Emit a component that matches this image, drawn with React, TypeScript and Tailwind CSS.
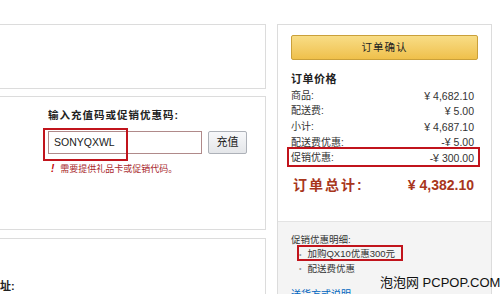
import type { ReactNode } from "react";

const font = {
  fontFamily: '"Liberation Sans", "Noto Sans CJK SC", Arial, sans-serif',
};

type PriceRowProps = {
  label: string;
  value: string;
};

function PriceRow({ label, value }: PriceRowProps) {
  return (
    <div className="flex h-[15.6px] items-center justify-between pr-[4px] text-[10px] leading-none text-[#333]">
      <span>{label}</span>
      <span className="text-[10.5px]">{value}</span>
    </div>
  );
}

function Mark({ className, children }: { className: string; children?: ReactNode }) {
  return (
    <div className={`pointer-events-none absolute border-2 border-[#c1141c] ${className}`}>
      {children}
    </div>
  );
}

export default function App() {
  return (
    <div
      style={font}
      className="relative flex h-[294px] w-[500px] overflow-hidden bg-white pt-[24px]"
    >
      {/* left column */}
      <div className="flex w-[266px] shrink-0 flex-col">
        <div className="h-[69px] border-y border-r border-[#dcdcdc]" />

        <div className="mt-[7px] h-[141px] border-y border-r border-[#dcdcdc] pl-[48px] pt-[11px]">
          <p className="text-[10.5px] font-bold leading-[14px] tracking-[1px] text-[#222]">
            输入充值码或促销优惠码:
          </p>
          <div className="mt-[9px] flex items-center gap-[6px]">
            <div className="flex h-[23px] w-[154px] items-center border border-[#b08a8a] pl-[5px] text-[10.5px] text-[#222]">
              SONYQXWL
            </div>
            <button
              type="button"
              className="h-[23px] w-[39px] rounded-[2px] border border-[#adb1b8] bg-gradient-to-b from-[#f7f8fa] to-[#e4e6e9] text-[11px] text-[#222]"
            >
              充值
            </button>
          </div>
          <p className="mt-[10px] flex items-center text-[9px] leading-none text-[#a8282c]">
            <span className="ml-[3px] mr-[6px] text-[10px] font-bold italic text-[#c40000]">!</span>
            需要提供礼品卡或促销代码。
          </p>
        </div>

        <div className="mt-[8px] flex-1 border-t border-r border-[#dcdcdc] pt-[39px]">
          <p className="-ml-[11px] text-[11px] font-bold text-[#222]">地址:</p>
        </div>
      </div>

      {/* right column */}
      <div className="ml-[11px] flex w-[215px] shrink-0 flex-col border border-[#dcdcdc]">
        <div className="px-[13px] pt-[10px]">
          <button
            type="button"
            className="flex h-[25px] w-[187px] items-center justify-center rounded-[2px] border border-[#caa03a] bg-gradient-to-b from-[#f8dd85] to-[#efc04a] text-[10.5px] tracking-[1px] text-[#222]"
          >
            订单确认
          </button>
          <p className="mt-[12px] text-[11px] font-bold leading-[14px] tracking-[0.5px] text-[#222]">
            订单价格
          </p>
          <div className="mt-[2px] flex flex-col">
            <PriceRow label="商品:" value="¥ 4,682.10" />
            <PriceRow label="配送费:" value="¥ 5.00" />
            <PriceRow label="小计:" value="¥ 4,687.10" />
            <PriceRow label="配送费优惠:" value="-¥ 5.00" />
            <PriceRow label="促销优惠:" value="-¥ 300.00" />
          </div>
          <div className="mt-[12px] flex items-center justify-between pl-[2px] pr-[4px] text-[14px] font-bold leading-none text-[#a8361c]">
            <span className="tracking-[2px]">订单总计:</span>
            <span>¥ 4,382.10</span>
          </div>
        </div>

        <div className="mt-[29px] flex-1 border-t border-[#e3e3e3] bg-[#f4f4f4] pl-[13px] pt-[13px] text-[9.5px] leading-none text-[#333]">
          <p>促销优惠明细:</p>
          <p className="mt-[5px] flex items-center pl-[8px]">
            <span className="mr-[6px] text-[7px] text-[#999]">•</span>加购QX10优惠300元
          </p>
          <p className="mt-[5px] flex items-center pl-[8px]">
            <span className="mr-[6px] text-[7px] text-[#999]">•</span>配送费优惠
          </p>
          <p className="mt-[17px] text-[10px] text-[#0066c0]">送货方式说明</p>
        </div>
      </div>

      {/* annotation boxes */}
      <Mark className="left-[43px] top-[128px] h-[33px] w-[85px]" />
      <Mark className="left-[287px] top-[147px] h-[20px] w-[193px]" />
      <Mark className="left-[297px] top-[245px] h-[16px] w-[106px]" />

      {/* watermark */}
      <div className="pointer-events-none absolute left-[380px] top-[276px] whitespace-nowrap text-[13px] leading-none text-[#111]">
        泡泡网 PCPOP.COM
      </div>
    </div>
  );
}
